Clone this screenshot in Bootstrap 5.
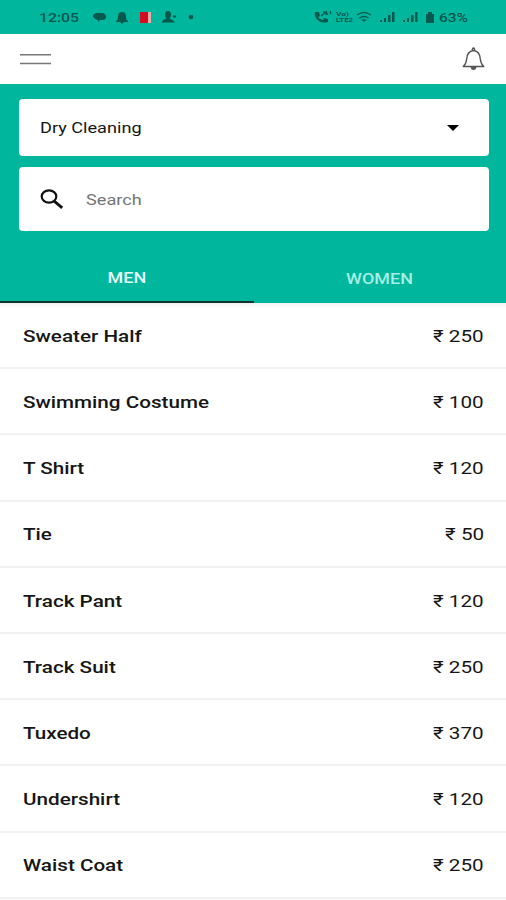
<!DOCTYPE html>
<html lang="en">
<head>
<meta charset="utf-8">
<meta name="viewport" content="width=device-width, initial-scale=1">
<title>Dry Cleaning Prices</title>
<link href="https://cdn.jsdelivr.net/npm/bootstrap@5.3.0/dist/css/bootstrap.min.css" rel="stylesheet">
<style>
:root{--teal:#00b69c;--status:#07584d}
body{font-family:Roboto,"Noto Sans",sans-serif;background:#fff;color:#161616;height:900px;overflow:hidden}
.wide,.wide-end,.wide-mid{display:inline-block;white-space:nowrap;transform:scaleX(1.215);transform-origin:left center}
.wide-end{transform-origin:right center}
.wide-mid{transform-origin:center}
.status-bar{height:34px;background:var(--teal);color:var(--status)}
.status-bar svg{display:block;width:100%;height:34px}
.status-bar text{font-family:Roboto,sans-serif;font-weight:500;font-size:12.5px}
.status-bar .volte{font-size:5.4px;font-weight:700}
.top-bar{height:50px;padding:0 21px 0 20px}
.filters{background:var(--teal);padding:15px 17px 0 19px;height:219px}
.field{background:#fff;border-radius:4px;padding-left:21px;padding-right:30px;font-size:15.5px}
.field .wide{transform:scaleX(1.17)}
.field-service{height:57px;margin-bottom:11px}
.field-service .wide{padding-top:2px}
.field-search{height:64px}
.field-search input{border:0;outline:0;padding:3px 0 0;margin-left:22px;background:none;color:#161616;width:250px}
.field-search input::placeholder{color:#747474;opacity:1}
.tab-row{margin:22px -17px 0 -19px;height:50px}
.tab-row .tab-link{height:50px;width:252px;padding:0;border:0;background:none;color:#a5eee2;font-size:14.8px;font-weight:500;line-height:52px}
.tab-row .tab-link.active{color:#e9fffb;border-bottom:2px solid #10342f;width:254px;line-height:51px}
.price-list{background:linear-gradient(#f1f1f1,#fff 5px)}
.price-list .price-row{height:66.2px;border:0;border-bottom:2px solid #f2f2f2;padding:3px 22px 0 23px;background:transparent;color:#161616;font-size:17px}
.price-row .item{font-weight:500}
</style>
</head>
<body>
<header>
  <div class="status-bar">
    <svg viewBox="0 0 506 34" fill="currentColor" aria-label="Status bar">
      <text x="39" y="22" textLength="40" lengthAdjust="spacingAndGlyphs">12:05</text>
      <path d="M96 13h7q3 1 3 4t-4 3h-2l-2 2v-2q-4-1-5-4 0-2 3-3z"/>
      <path d="M116 21q2-1 2-4 0-5 4-5t4 5q0 3 2 4v1h-12zM120 22h4l-2 2z"/>
      <path fill="#d5091f" d="M140 12h8v11h-8z"/><path fill="#e5aaa9" d="M148 12h3v11h-3z"/>
      <path d="M165 15q0-4 3-4t3 4q0 2-1.500 3.500 4 1.500 5.500 4H161.500q1-3 5-4Q165 17 165 15zM173 15.500h3v2h-3z"/>
      <circle cx="191" cy="17" r="2.300"/>
      <path d="M315 12l4 0 1 4-2 1q2 3 5 3l1-2 4 1v3q-8 2-12-4-2-3-1-6z"/>
      <path fill="none" stroke="currentColor" stroke-width="1.300" d="M321 16l5-4h-3m3 0v3M328 15q-1-2-3-3M330 11l1 3"/>
      <text class="volte" x="336" y="15.700" textLength="13" lengthAdjust="spacingAndGlyphs">Vo)</text>
      <text class="volte" x="336" y="22.300" textLength="17" lengthAdjust="spacingAndGlyphs">LTE2</text>
      <path fill="none" stroke="currentColor" stroke-width="1.500" d="M357 15q7-5 14 0M359.500 18q5-3 9 0"/><path d="M361 19.500h6l-3 2.500z"/>
      <path d="M380 20h2v2h-2zM384 18h2v4h-2zM388 15h2.500v7H388zM392 12h2.500v10H392zM403 20h2v2h-2zM407 18h2v4h-2zM411 15h2.500v7H411zM415 12h2.500v10H415z"/>
      <path d="M428 12h4v2h2v9h-8v-9h2z"/>
      <text x="439" y="22" textLength="29" lengthAdjust="spacingAndGlyphs">63%</text>
    </svg>
  </div>
  <nav class="top-bar d-flex align-items-center justify-content-between" aria-label="Main">
    <svg width="31" height="12" viewBox="0 0 31 12" stroke="#777" stroke-width="1.500"><path d="M0 1.700h31M0 10.500h31"/></svg>
    <svg width="23" height="24" viewBox="0 0 23 24" fill="none" stroke="#555" stroke-width="1.400" stroke-linejoin="round"><path d="M1.200 19.500q3-2.500 3.500-7.500Q5 4.500 11.500 3.500 18 4.500 18.300 12q.5 5 3.500 7.500z"/><path d="M10.300 3.500q0-2.500 1.200-2.500t1.200 2.500"/><path fill="#555" d="M9.300 20.300h4.400q-.4 2-2.200 2t-2.200-2z"/></svg>
  </nav>
</header>
<section class="filters">
  <div class="field field-service d-flex align-items-center justify-content-between">
    <span class="wide">Dry Cleaning</span>
    <svg width="12" height="6" viewBox="0 0 12 6"><path d="M0 0h12L6 6z"/></svg>
  </div>
  <div class="field field-search d-flex align-items-center">
    <svg width="24" height="20" viewBox="0 0 24 20" fill="none" stroke="#111" stroke-width="2.200"><ellipse cx="9" cy="7.500" rx="7.300" ry="6.200"/><path d="M14.200 12.200l8 6.600" stroke-width="2.900"/></svg>
    <input class="wide" type="text" placeholder="Search" aria-label="Search">
  </div>
  <div class="tab-row d-flex" role="tablist">
    <button class="tab-link active" role="tab"><span class="wide-mid">MEN</span></button>
    <button class="tab-link" role="tab"><span class="wide-mid">WOMEN</span></button>
  </div>
</section>
<main class="price-list">
  <div class="price-row d-flex align-items-center justify-content-between"><span class="wide item">Sweater Half</span><span class="wide-end">₹ 250</span></div>
  <div class="price-row d-flex align-items-center justify-content-between"><span class="wide item">Swimming Costume</span><span class="wide-end">₹ 100</span></div>
  <div class="price-row d-flex align-items-center justify-content-between"><span class="wide item">T Shirt</span><span class="wide-end">₹ 120</span></div>
  <div class="price-row d-flex align-items-center justify-content-between"><span class="wide item">Tie</span><span class="wide-end">₹ 50</span></div>
  <div class="price-row d-flex align-items-center justify-content-between"><span class="wide item">Track Pant</span><span class="wide-end">₹ 120</span></div>
  <div class="price-row d-flex align-items-center justify-content-between"><span class="wide item">Track Suit</span><span class="wide-end">₹ 250</span></div>
  <div class="price-row d-flex align-items-center justify-content-between"><span class="wide item">Tuxedo</span><span class="wide-end">₹ 370</span></div>
  <div class="price-row d-flex align-items-center justify-content-between"><span class="wide item">Undershirt</span><span class="wide-end">₹ 120</span></div>
  <div class="price-row d-flex align-items-center justify-content-between"><span class="wide item">Waist Coat</span><span class="wide-end">₹ 250</span></div>
</main>
<script src="https://cdn.jsdelivr.net/npm/bootstrap@5.3.0/dist/js/bootstrap.bundle.min.js"></script>
</body>
</html>
